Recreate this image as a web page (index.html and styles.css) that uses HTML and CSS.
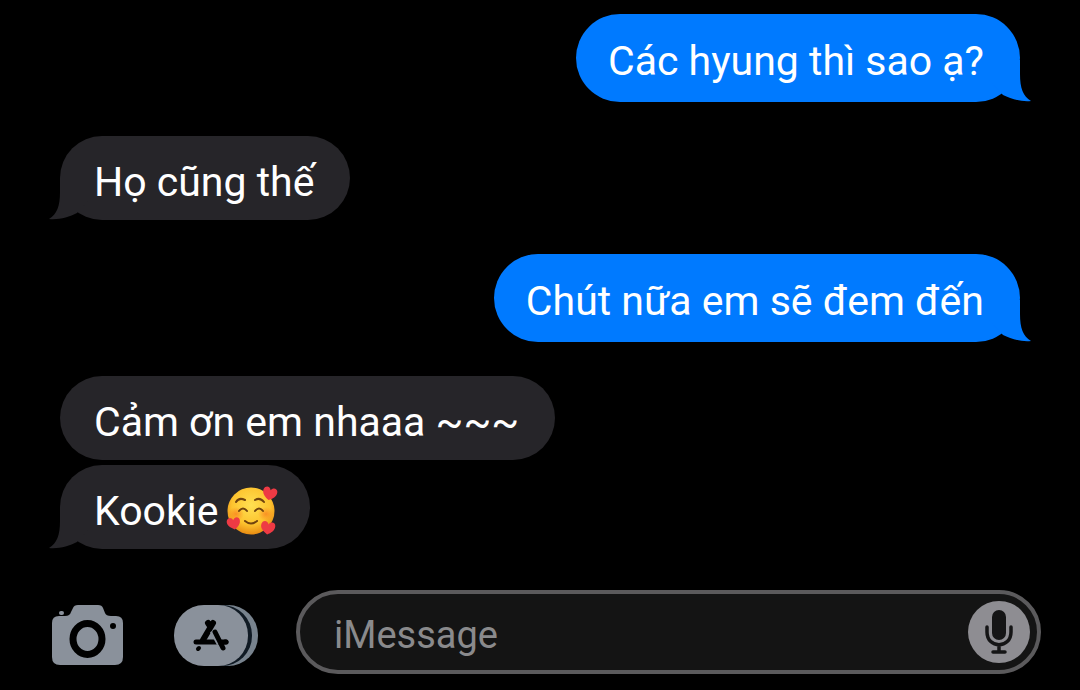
FILE: index.html
```html
<!DOCTYPE html>
<html lang="vi">
<head>
  <meta charset="UTF-8">
  <meta name="viewport" content="width=device-width, initial-scale=1.0">
  <title>iMessage</title>
  <link rel="stylesheet" href="styles.css">
</head>
<body>
  <svg width="0" height="0" class="defs" aria-hidden="true">
    <symbol id="tail" viewBox="0 0 42 42">
      <path d="M11 0V14C11 28 8 36 0 41C10 42 20 39 28 35L42 20V0Z"/>
    </symbol>
    <symbol id="heart" viewBox="0 0 16 15">
      <path d="M8 14C3 11 0 8 1 4C2 0 7 0 8 4C10 0 15 1 15 5C15 9 12 12 8 14Z"/>
    </symbol>
  </svg>

  <main class="chat">
    <div class="bubble sent">Các hyung thì sao ạ?
      <svg class="tail"><use href="#tail"/></svg>
    </div>
    <div class="bubble received">Họ cũng thế
      <svg class="tail"><use href="#tail"/></svg>
    </div>
    <div class="bubble sent">Chút nữa em sẽ đem đến
      <svg class="tail"><use href="#tail"/></svg>
    </div>
    <div class="bubble received">Cảm ơn em nhaaa ~~~</div>
    <div class="bubble received follow">Kookie
      <svg class="emoji" viewBox="0 0 52 50" role="img" aria-label="🥰">
        <defs>
          <radialGradient id="face" cx="50%" cy="38%" r="62%">
            <stop offset="0" stop-color="#ffe052"/>
            <stop offset="0.65" stop-color="#fdc42f"/>
            <stop offset="1" stop-color="#e88b12"/>
          </radialGradient>
          <radialGradient id="blush">
            <stop offset="0" stop-color="#f87a1d" stop-opacity="0.7"/>
            <stop offset="1" stop-color="#f87a1d" stop-opacity="0"/>
          </radialGradient>
        </defs>
        <circle cx="25" cy="25" r="23.500" fill="url(#face)"/>
        <ellipse cx="10" cy="28" rx="8" ry="7" fill="url(#blush)"/>
        <ellipse cx="40" cy="28" rx="8" ry="7" fill="url(#blush)"/>
        <g fill="none" stroke="#70430e" stroke-width="2" stroke-linecap="round">
          <path d="M10 16Q13 11 19 14M29 14Q34 11 38 16"/>
          <path d="M13 25Q17 20 21 25M29 25Q33 20 37 25"/>
          <path d="M19 35Q25 40 31 35"/>
        </g>
        <g fill="#ee3a44">
          <use href="#heart" x="36" y="0" width="16" height="15" transform="rotate(12 43 7)"/>
          <use href="#heart" x="0" y="30" width="15" height="15" transform="rotate(-10 7 36)"/>
          <use href="#heart" x="34" y="34" width="16" height="16" transform="rotate(8 42 42)"/>
        </g>
      </svg>
      <svg class="tail"><use href="#tail"/></svg>
    </div>
  </main>

  <form class="composer">
    <button type="button" class="icon camera" aria-label="Camera">
      <svg viewBox="0 0 72 60">
        <path fill="#8a919b" d="M0 18Q0 11 7 11H13Q18 11 19 7L21 3Q22 0 26 0H46Q50 0 51 3L53 8Q54 11 59 11H64Q71 11 71 18V52Q71 60 63 60H8Q0 60 0 52Z"/>
        <rect x="7" y="6" width="5" height="4" rx="2" fill="#8a919b"/>
        <ellipse cx="35.500" cy="34" rx="14.500" ry="15.500" fill="none" stroke="#000" stroke-width="7"/>
        <circle cx="61" cy="21" r="3"/>
      </svg>
    </button>
    <button type="button" class="icon apps" aria-label="Apps">
      <svg viewBox="0 0 84 61">
        <rect x="20" y="0" width="64" height="61" rx="30" fill="#78838e"/>
        <rect x="14" y="0" width="64" height="61" rx="30" fill="#101a24"/>
        <rect x="0" y="0" width="74" height="61" rx="30" fill="#8a919b"/>
        <g fill="none" stroke="#000" stroke-width="5" stroke-linecap="round">
          <path d="M22 37H52"/>
          <path d="M24 44L25 43" stroke-width="4"/>
          <path d="M39 18L29 35M34 18L36 21" stroke-width="6"/>
          <path d="M40 25L47 38" stroke="#8a919b" stroke-width="9" stroke-linecap="butt"/>
          <path d="M41 27L49 43M48 37H52"/>
        </g>
      </svg>
    </button>
    <div class="field">
      <input type="text" placeholder="iMessage" aria-label="iMessage">
      <button type="button" class="mic" aria-label="Dictate">
        <svg viewBox="0 0 62 62">
          <rect x="24" y="9" width="14" height="30" rx="7" fill="#151516"/>
          <path d="M19 26V31C19 48 43 48 43 31V26M31 44V51M25 51H37" fill="none" stroke="#151516" stroke-width="3.500" stroke-linecap="round"/>
        </svg>
      </button>
    </div>
  </form>
</body>
</html>
```
FILE: styles.css
```css
* {
  box-sizing: border-box;
}
body {
  margin: 0;
  background-color: #000;
  color: #fff;
  font-family: Roboto, "Liberation Sans", sans-serif;
}
.defs {
  position: absolute;
}
.chat {
  display: flex;
  flex-direction: column;
  gap: 34px;
  padding: 14px 60px 0;
}
.bubble {
  position: relative;
  padding: 20px 36px 12px 34px;
  border-radius: 44px;
  font-size: 41px;
  line-height: 52px;
}
.sent {
  align-self: flex-end;
  padding: 21px 36px 15px 32px;
  background-color: #007aff;
  color: #fff;
  fill: #007aff;
}
.received {
  align-self: flex-start;
  background-color: #262529;
  fill: #262529;
}
.follow {
  display: flex;
  align-items: center;
  gap: 8px;
  margin-top: -29px;
  padding-right: 32px;
}
.tail {
  position: absolute;
  bottom: 0;
  left: -11px;
  width: 42px;
  height: 42px;
}
.sent .tail {
  left: auto;
  right: -11px;
  transform: scaleX(-1);
}
.emoji {
  width: 52px;
  height: 50px;
}
.composer {
  display: flex;
  align-items: center;
  padding: 41px 39px 16px 52px;
}
button {
  padding: 0;
  border: none;
  background: none;
  cursor: pointer;
}
button svg {
  display: block;
  width: 100%;
}
.icon {
  flex: none;
  padding-top: 6px;
}
.camera {
  width: 72px;
  margin-right: 50px;
}
.apps {
  width: 84px;
  margin-right: 38px;
}
.field {
  display: flex;
  flex: 1;
  align-items: center;
  height: 84px;
  padding: 0 7px 0 34px;
  border: 4px solid #5b5a5c;
  border-radius: 42px;
  background-color: #141414;
}
input {
  flex: 1;
  min-width: 0;
  padding: 6px 0 0;
  border: none;
  outline: none;
  background: none;
  color: #fff;
  font-family: inherit;
  font-size: 38px;
  line-height: 52px;
}
input::placeholder {
  color: #8a8a8c;
  opacity: 1;
}
.mic {
  flex: none;
  width: 62px;
  height: 62px;
  border-radius: 50%;
  background-color: #8e8d92;
}
```
